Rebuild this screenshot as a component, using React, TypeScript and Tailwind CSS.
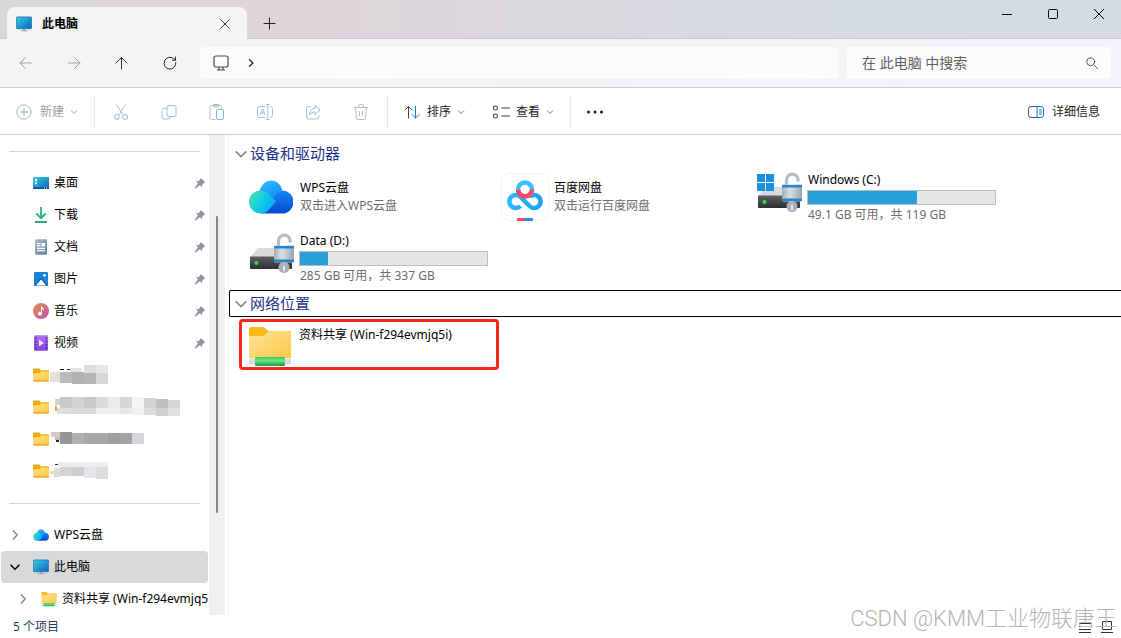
import type { ReactNode } from "react";

type IconProps = { className?: string };

type Drive = { name: string; free: string; used: number; system?: boolean };

type Block = [x: number, y: number, w: number, h: number, fill: string];

function MonitorIcon({ className = "w-4 h-4" }: IconProps) {
  return (
    <svg viewBox="0 0 16 16" className={className} aria-hidden="true">
      <defs>
        <linearGradient id="monitor" x1="0" y1="0" x2="1" y2="1">
          <stop offset="0" stopColor="#35d0e2" />
          <stop offset="1" stopColor="#0f63bd" />
        </linearGradient>
      </defs>
      <path d="M7 12h2v2.200h2.200v1H4.800v-1H7z" fill="#9aa7b2" />
      <rect x="0.400" y="0.900" width="15.200" height="11.800" rx="0.800" fill="url(#monitor)" stroke="#1c6f9e" strokeWidth="0.700" />
    </svg>
  );
}

function DesktopIcon() {
  return (
    <svg viewBox="0 0 16 16" className="w-4 h-4" aria-hidden="true">
      <rect y="2" width="16" height="12" rx="1" fill="url(#monitor)" />
      <path d="M0 12.500h16V13a1 1 0 0 1-1 1H1a1 1 0 0 1-1-1z" fill="#0b4a86" />
      <path d="M2 4h2v2H2zM2 7.300h2v2H2zM11 12.500h1v1h-1zM13 12.500h1v1h-1z" fill="#fff" />
    </svg>
  );
}

function DownloadIcon() {
  return (
    <svg viewBox="0 0 16 16" className="w-4 h-4" fill="none" stroke="#1fb886" strokeWidth="1.800" aria-hidden="true">
      <path d="M8 0v11M3.300 6.500 8 11.200l4.700-4.700" />
      <path d="M2 15h12" stroke="#129c74" />
    </svg>
  );
}

function DocumentIcon() {
  return (
    <svg viewBox="0 0 16 16" className="w-4 h-4" aria-hidden="true">
      <defs>
        <linearGradient id="document" x1="0" y1="0" x2="1" y2="1">
          <stop offset="0" stopColor="#a9bdd0" />
          <stop offset="1" stopColor="#5f7d9c" />
        </linearGradient>
      </defs>
      <rect x="2" y="0.300" width="12" height="15.500" rx="1" fill="url(#document)" />
      <path d="M4 4h3.500v1.300H4zM4 6.300h3.500v1.300H4zM8.500 4H12v3.600H8.500zM4 8.800h8v1.200H4zM4 11h8v1.200H4z" fill="#fff" />
    </svg>
  );
}

function PictureIcon() {
  return (
    <svg viewBox="0 0 16 16" className="w-4 h-4" aria-hidden="true">
      <rect x="1" y="1" width="14" height="14" rx="1.200" fill="#1583da" />
      <path d="M1 14.800 7.200 7.500a1 1 0 0 1 1.600 0L15 14.800z" fill="#0c5fb2" />
      <path d="M3 14.500 7.400 9a.8.8 0 0 1 1.200 0l4.500 5.500z" fill="#fff" />
      <circle cx="11.500" cy="4.300" r="1.400" fill="#fff" />
    </svg>
  );
}

function MusicIcon() {
  return (
    <svg viewBox="0 0 16 16" className="w-4 h-4" aria-hidden="true">
      <defs>
        <linearGradient id="music" x1="0" y1="0" x2="1" y2="1">
          <stop offset="0" stopColor="#f08a55" />
          <stop offset="1" stopColor="#b4559b" />
        </linearGradient>
      </defs>
      <circle cx="8" cy="8" r="8" fill="url(#music)" />
      <path d="M8 3.200h.9c.2 1.300 1 1.900 2.100 2.200v1.500C10.200 6.800 9.500 6.500 9 6v4.500A2 2 0 1 1 8 8.900z" fill="#fff" />
    </svg>
  );
}

function VideoIcon() {
  return (
    <svg viewBox="0 0 16 16" className="w-4 h-4" aria-hidden="true">
      <defs>
        <linearGradient id="video" x1="0" y1="0" x2="0" y2="1">
          <stop offset="0" stopColor="#b072f5" />
          <stop offset="1" stopColor="#8444de" />
        </linearGradient>
      </defs>
      <rect x="1" y="0.300" width="14" height="15.500" rx="1" fill="url(#video)" />
      <path
        d="M2 2.500h1.500V4H2zM2 5.800h1.500v1.500H2zM2 9h1.500v1.500H2zM2 12.300h1.500v1.500H2zM12.500 2.500H14V4h-1.500zM12.500 5.800H14v1.500h-1.500zM12.500 9H14v1.500h-1.500zM12.500 12.300H14v1.500h-1.500z"
        fill="#4c2396"
      />
      <path d="M6 4.800 11 8l-5 3.300z" fill="#f1e6ff" />
    </svg>
  );
}

function FolderIcon() {
  return (
    <svg viewBox="0 0 16 16" className="w-4 h-4" aria-hidden="true">
      <defs>
        <linearGradient id="folder" x1="0" y1="0" x2="1" y2="1">
          <stop offset="0" stopColor="#ffe28c" />
          <stop offset="1" stopColor="#fdc63c" />
        </linearGradient>
      </defs>
      <path d="M0 2.500a1 1 0 0 1 1-1h5.300L8 3.300h7a1 1 0 0 1 1 1V8H0z" fill="#f3aa12" />
      <path d="M0 6.200h6.500L8.200 4.500H15a1 1 0 0 1 1 1v8a1 1 0 0 1-1 1H1a1 1 0 0 1-1-1z" fill="url(#folder)" />
      <path d="M0 13.200h16v.3a1 1 0 0 1-1 1H1a1 1 0 0 1-1-1z" fill="#e9a51f" />
    </svg>
  );
}

function NetworkFolderIcon({ className = "w-4 h-4" }: IconProps) {
  return (
    <svg viewBox="0 0 44 44" className={className} aria-hidden="true">
      <defs>
        <linearGradient id="share-front" x1="0" y1="0" x2="1" y2="1">
          <stop offset="0" stopColor="#ffe49a" />
          <stop offset="1" stopColor="#fcc744" />
        </linearGradient>
        <linearGradient id="share-pipe" x1="0" y1="0" x2="0" y2="1">
          <stop offset="0" stopColor="#3bc55f" />
          <stop offset="0.400" stopColor="#69e884" />
          <stop offset="1" stopColor="#179a3c" />
        </linearGradient>
      </defs>
      <path d="M1 5a2 2 0 0 1 2-2h11c1.500 0 2.500.6 3.500 1.600L20 7h21a2 2 0 0 1 2 2v10H1z" fill="#fbb916" />
      <path d="M1 12h13c1.500 0 2.300-.5 3.300-1.500L19.500 8.300c.7-.8 1.500-1.100 2.500-1.100h19a2 2 0 0 1 2 2V34H1z" fill="url(#share-front)" />
      <rect x="1" y="34.500" width="42" height="6" rx="1" fill="#d9dde0" />
      <rect x="7" y="33" width="30" height="9" rx="1" fill="url(#share-pipe)" />
    </svg>
  );
}

function CloudIcon({ className = "w-4 h-4" }: IconProps) {
  return (
    <svg viewBox="0 0 44 34" className={className} aria-hidden="true">
      <defs>
        <linearGradient id="cloud-left" x1="0" y1="0.200" x2="1" y2="0.800">
          <stop offset="0" stopColor="#3fe6a8" />
          <stop offset="0.500" stopColor="#12c8e8" />
          <stop offset="1" stopColor="#0aa2f7" />
        </linearGradient>
        <linearGradient id="cloud-top" x1="0" y1="0" x2="0.500" y2="1">
          <stop offset="0" stopColor="#35c3ff" />
          <stop offset="1" stopColor="#0e86fb" />
        </linearGradient>
        <linearGradient id="cloud-right" x1="0" y1="0" x2="0" y2="1">
          <stop offset="0" stopColor="#1488f5" />
          <stop offset="1" stopColor="#0747cf" />
        </linearGradient>
      </defs>
      <path d="M33 10.500a11.500 11.500 0 0 1 0 23H12L28 12.500a12 12 0 0 1 5-2z" fill="url(#cloud-right)" />
      <path d="M10.500 11.500C12 5 16.500.5 22.200.5c5.300 0 9.600 3.800 11 10-3 .8-5 2.400-7 5L20 22z" fill="url(#cloud-top)" />
      <path d="M11.500 10.500c3.800 0 6.500 1.600 9 4.500l6.700 6.300-7.500 8.700c-2 2.400-4.600 3.500-8.200 3.500a11.500 11.500 0 0 1 0-23z" fill="url(#cloud-left)" />
    </svg>
  );
}

function BaiduDiskIcon() {
  return (
    <svg viewBox="0 0 48 48" className="w-12 h-12" fill="none" aria-hidden="true">
      <defs>
        <linearGradient id="disk-loop" x1="0" y1="0" x2="1" y2="0">
          <stop offset="0" stopColor="#2ab9ff" />
          <stop offset="1" stopColor="#18a2fb" />
        </linearGradient>
      </defs>
      <rect x="0.500" y="0.500" width="47" height="47" rx="8" fill="#fff" stroke="#f1f1f1" />
      <circle cx="24" cy="16.500" r="7" stroke="#38c0ff" strokeWidth="4.500" />
      <path d="M19.500 33a6.500 6.500 0 1 1 .5-8.500l8 8a6.500 6.500 0 1 0 .5-8.500" stroke="url(#disk-loop)" strokeWidth="4.500" />
      <path d="M17 16.500a7 7 0 0 0 14 0" stroke="#fb4a67" strokeWidth="4.500" />
      <path d="M16 45h8v3h-8z" fill="#fb4a67" />
      <path d="M24 45h8v3h-8z" fill="#2a8cff" />
    </svg>
  );
}

function DriveIcon({ system }: { system?: boolean }) {
  return (
    <svg viewBox="0 0 48 48" className="w-12 h-12" aria-hidden="true">
      <defs>
        <linearGradient id="drive-front" x1="0" y1="0" x2="0" y2="1">
          <stop offset="0" stopColor="#5f6164" />
          <stop offset="1" stopColor="#2d2e30" />
        </linearGradient>
        <linearGradient id="lock-body" x1="0" y1="0" x2="1" y2="0">
          <stop offset="0" stopColor="#a4adb6" />
          <stop offset="0.400" stopColor="#dbe1e6" />
          <stop offset="1" stopColor="#9aa4ae" />
        </linearGradient>
      </defs>
      <path d="M11 16h27l7 9H3z" fill="#d9dadc" />
      <rect x="3" y="24.500" width="42" height="12.500" rx="1" fill="url(#drive-front)" />
      <circle cx="9.500" cy="31" r="1.900" fill="#36e04a" />
      {system && <path d="M2 3h8v8H2zM11 3h8v8h-8zM2 12h8v8H2zM11 12h8v8h-8z" fill="#1a90e0" />}
      <path d="M31.500 15V9a5.800 5.800 0 0 1 11.600 0v1.500" fill="none" stroke="#b4bcc4" strokeWidth="3.200" />
      <circle cx="37" cy="35.500" r="5.500" fill="#a9b2bb" />
      <path d="M37 34.500v4" stroke="#e7ebee" strokeWidth="1.800" strokeLinecap="round" />
      <rect x="27" y="13.500" width="20" height="17" rx="1" fill="url(#lock-body)" />
      <path d="M27 14h20v2.600H27zM27 27.500h20v2.600H27z" fill="#2287d4" />
    </svg>
  );
}

function PinIcon() {
  return (
    <svg viewBox="0 0 12 12" className="w-3 h-3" aria-hidden="true">
      <path d="M7 1 11.200 5.200 9.900 6 8.300 7.600 8 10.200 5.700 8.300 2 11.200 1 11.300 1 10.300 3.900 6.500 1.900 4.300 4.600 3.900 6.200 2.300z" fill="#8a97a3" />
    </svg>
  );
}

function LineIcon({ children, className = "w-4 h-4" }: IconProps & { children: ReactNode }) {
  return (
    <svg viewBox="0 0 16 16" className={className} fill="none" stroke="currentColor" strokeLinecap="round" strokeLinejoin="round" aria-hidden="true">
      {children}
    </svg>
  );
}

function Chevron({ className = "w-2 h-2" }: IconProps) {
  return (
    <svg viewBox="0 0 8 8" className={className} fill="none" stroke="currentColor" aria-hidden="true">
      <path d="M1 2.500 4 5.500 7 2.500" />
    </svg>
  );
}

function Redacted({ blocks, label }: { blocks: Block[]; label: string }) {
  return (
    <svg viewBox="0 0 136 24" className="w-[136px] h-6 -ml-1" shapeRendering="crispEdges" role="img" aria-label={label}>
      {blocks.map(([x, y, w, h, fill]) => (
        <rect key={`${x}-${y}`} x={x} y={y} width={w} height={h} fill={fill} />
      ))}
    </svg>
  );
}

const pinned = [
  { label: "桌面", icon: <DesktopIcon /> },
  { label: "下载", icon: <DownloadIcon /> },
  { label: "文档", icon: <DocumentIcon /> },
  { label: "图片", icon: <PictureIcon /> },
  { label: "音乐", icon: <MusicIcon /> },
  { label: "视频", icon: <VideoIcon /> },
];

// folder names are hidden behind pixel blocks, coordinates are inside a 136x24 strip
const hiddenFolders: Block[][] = [
  [
    [10, 6, 4, 1, "#222"], [17, 6, 3, 1, "#222"],
    [20, 5, 12, 6, "#e4e4e5"], [34, 2, 12, 9, "#dedddf"], [46, 2, 12, 9, "#e8e8ea"],
    [0, 9, 10, 10, "#e3dfd8"], [10, 9, 12, 11, "#bab9b8"], [22, 9, 12, 12, "#b1b1b4"], [34, 10, 12, 11, "#b7b6b7"], [46, 10, 12, 11, "#d7d7da"],
  ],
  [
    [5, 4, 5, 6, "#d3d1cf"], [10, 2, 12, 11, "#c9cacd"], [22, 2, 12, 11, "#d6d2d1"], [34, 2, 12, 11, "#cacacd"], [46, 2, 12, 11, "#dbdadd"],
    [58, 2, 12, 11, "#ecebea"], [70, 2, 12, 11, "#d8d5d3"], [82, 2, 12, 11, "#f1f4f8"], [94, 3, 12, 10, "#d6d2ce"], [106, 4, 12, 9, "#bcbebf"], [118, 5, 12, 8, "#d3d5d6"],
    [5, 11, 2, 5, "#eda04f"], [7, 13, 15, 6, "#dedddd"], [22, 13, 24, 6, "#d9d9da"], [46, 13, 24, 6, "#eeeeee"], [70, 13, 12, 6, "#e6e8e9"],
    [82, 13, 12, 7, "#f1f0f0"], [94, 13, 12, 7, "#dedddb"], [106, 13, 12, 8, "#d2d0ce"], [118, 13, 12, 8, "#dfe3e6"],
  ],
  [
    [1, 5, 9, 5, "#d3cdc3"], [5, 10, 5, 3, "#bdb9b3"], [6, 13, 3, 2, "#222"], [10, 5, 12, 12, "#969696"], [22, 6, 12, 11, "#b1afb3"],
    [34, 6, 12, 11, "#a6a6a5"], [46, 6, 12, 11, "#a7a8aa"], [58, 6, 12, 11, "#a19e9d"], [70, 6, 12, 11, "#a3a3a3"], [82, 6, 12, 11, "#d4d8dc"],
  ],
  [
    [5, 5, 3, 1, "#222"], [8, 3, 14, 5, "#ececec"], [22, 3, 36, 5, "#eeeeee"], [0, 12, 4, 3, "#dfdbd7"], [4, 9, 6, 9, "#dfdbd7"],
    [10, 8, 12, 9, "#d5d3d3"], [22, 8, 12, 9, "#cfcfcf"], [34, 8, 12, 11, "#e1e7ea"], [46, 8, 12, 12, "#dedee1"],
  ],
];

const driveC: Drive = { name: "Windows (C:)", free: "49.1 GB 可用，共 119 GB", used: 58.5, system: true };
const driveD: Drive = { name: "Data (D:)", free: "285 GB 可用，共 337 GB", used: 15 };

function TitleBar() {
  return (
    <header className="flex items-end h-[39px] pl-[7px] border-b border-[#c9cbd5] bg-linear-to-r from-[#d8d8d9] via-[#dfd5d9] via-25% to-[#d5dbe5] to-75%">
      <div className="flex items-center w-60 h-8 -mb-px pl-[9px] pr-3 pt-px rounded-t-lg bg-[#f4f4f4]">
        <MonitorIcon />
        <span className="ml-2.5 text-xs font-semibold text-black">此电脑</span>
        <button aria-label="关闭标签页" className="ml-auto flex items-center justify-center w-5 h-5 text-[#222]">
          <LineIcon className="w-3.5 h-3.5">
            <path d="M3 3 13 13M13 3 3 13" />
          </LineIcon>
        </button>
      </div>
      <button aria-label="新建标签页" className="flex items-center justify-center w-8 h-[30px] ml-1.5 text-[#222]">
        <LineIcon>
          <path d="M8.500 3v11M3 8.500h11" />
        </LineIcon>
      </button>
      <div className="flex self-start ml-auto -mr-px text-black">
        <button aria-label="最小化" className="flex items-center justify-center w-[46px] h-7">
          <svg viewBox="0 0 10 10" className="w-2.5 h-2.5" stroke="currentColor"><path d="M0 5.500h10" /></svg>
        </button>
        <button aria-label="最大化" className="flex items-center justify-center w-[46px] h-7">
          <svg viewBox="0 0 10 10" className="w-2.5 h-2.5" fill="none" stroke="currentColor"><rect x="0.500" y="0.500" width="9" height="9" rx="1" /></svg>
        </button>
        <button aria-label="关闭" className="flex items-center justify-center w-[46px] h-7">
          <svg viewBox="0 0 10 10" className="w-2.5 h-2.5" stroke="currentColor"><path d="M0 0 10 10M10 0 0 10" /></svg>
        </button>
      </div>
    </header>
  );
}

function NavButton({ label, disabled, children }: { label: string; disabled?: boolean; children: ReactNode }) {
  return (
    <button aria-label={label} disabled={disabled} className="flex items-center justify-center w-12 h-8 text-[#2b2b2b] disabled:text-[#a3a3a3]">
      <LineIcon>{children}</LineIcon>
    </button>
  );
}

function NavBar() {
  return (
    <div className="flex items-center h-[49px] pl-0.5 pr-2.5 border-b border-[#c9cad4] bg-linear-to-r from-[#f4f4f4] via-[#f5f2f4] to-[#f2f4f8]">
      <NavButton label="后退" disabled>
        <path d="M14 8H2M7.500 2.500 2 8l5.500 5.500" />
      </NavButton>
      <NavButton label="前进" disabled>
        <path d="M2 8h12M8.500 2.500 14 8l-5.500 5.500" />
      </NavButton>
      <NavButton label="向上">
        <path d="M7.500 14V2.500M2 8l5.500-5.500L13 8" />
      </NavButton>
      <NavButton label="刷新">
        <path d="M13.800 7.500A5.900 5.900 0 1 1 11.500 3.500L13.300 5M13.500 2v3.200h-3.200" />
      </NavButton>
      <div className="flex flex-1 items-center h-8 ml-1.5 pl-3 rounded bg-[#fbfbfc]">
        <button aria-label="此电脑" className="text-[#4a4a4a]">
          <svg viewBox="0 0 18 18" className="w-[18px] h-[18px]" fill="none" stroke="currentColor" strokeWidth="1.200" aria-hidden="true">
            <rect x="2" y="2" width="14" height="11" rx="2" />
            <path d="M7 13v2.500M11 13v2.500M5 16h8" />
          </svg>
        </button>
        <button aria-label="展开路径" className="ml-4 text-[#222]">
          <Chevron className="w-2.5 h-2.5 -rotate-90" />
        </button>
      </div>
      <label className="flex items-center w-66 h-8 ml-2 pl-[15px] pr-3 rounded bg-[#fcfcfc]">
        <input type="search" aria-label="搜索" placeholder="在 此电脑 中搜索" className="flex-1 min-w-0 bg-transparent text-sm outline-none placeholder:text-[#5f5f5f]" />
        <LineIcon className="w-3.5 h-3.5 text-[#444]">
          <circle cx="6.500" cy="6.500" r="4.500" />
          <path d="M10 10 14.500 14.500" />
        </LineIcon>
      </label>
    </div>
  );
}

function ToolButton({ label, children }: { label: string; children: ReactNode }) {
  return (
    <button aria-label={label} disabled className="flex items-center justify-center w-12 h-8 text-[#b9bcbf]">
      <svg viewBox="0 0 18 18" className="w-[18px] h-[18px]" fill="none" stroke="currentColor" strokeLinejoin="round" aria-hidden="true">
        {children}
      </svg>
    </button>
  );
}

function Toolbar() {
  return (
    <div className="flex items-center h-[47px] pt-0.5 border-b border-[#c9cbd3] bg-white text-xs text-[#1b1b1b]">
      <button disabled className="flex items-center pl-4 w-[94px] h-8 text-[#a0a0a0]">
        <LineIcon>
          <circle cx="8" cy="8" r="7.200" stroke="#b8babd" />
          <path d="M8 4.500v7M4.500 8h7" stroke="#7ab5e6" />
        </LineIcon>
        <span className="ml-2">新建</span>
        <Chevron className="w-2 h-2 ml-1.5" />
      </button>
      <span className="w-px h-8 mr-0.5 bg-[#e8e8e8]" />
      <ToolButton label="剪切">
        <path d="M4.500 1.500 11.200 12M13.500 1.500 6.800 12" />
        <circle cx="4.800" cy="14" r="2.500" stroke="#8cc3ee" />
        <circle cx="13.200" cy="14" r="2.500" stroke="#8cc3ee" />
      </ToolButton>
      <ToolButton label="复制">
        <path d="M7 5.500H4a2 2 0 0 0-2 2V14a2 2 0 0 0 2 2h4a2 2 0 0 0 2-2" />
        <rect x="7" y="2.500" width="9" height="11" rx="2" stroke="#8cc3ee" />
      </ToolButton>
      <ToolButton label="粘贴">
        <path d="M7.500 16.500h-4a1.500 1.500 0 0 1-1.500-1.500V4a1.500 1.500 0 0 1 1.500-1.500H12A1.500 1.500 0 0 1 13.500 4v1.500M5.500 1.500h5v2.500h-5z" />
        <rect x="8.500" y="6.500" width="7" height="10" rx="1.500" stroke="#7ab8ea" />
      </ToolButton>
      <ToolButton label="重命名">
        <path d="M9.500 3.500h-6a2 2 0 0 0-2 2v7a2 2 0 0 0 2 2h6M14 3.500a2.500 2.500 0 0 1 2.500 2.500v6A2.500 2.500 0 0 1 14 14.500" />
        <path d="M4.200 12 6.700 6l2.500 6M5.200 10h3M11.800 1.500v15M10 1.500h3.600M10 16.500h3.600" stroke="#8cc3ee" />
      </ToolButton>
      <ToolButton label="共享">
        <path d="M7 3.500H4.500a2 2 0 0 0-2 2V14a2 2 0 0 0 2 2H13a2 2 0 0 0 2-2v-2" />
        <path d="M11 2.500 16 7l-5 4.500V9C8.500 9 6.800 10 5.500 12c.2-4 2-6.500 5.500-7z" stroke="#8cc3ee" />
      </ToolButton>
      <ToolButton label="删除">
        <path d="M2 4.500h14M6.500 4.500V3a1.500 1.500 0 0 1 1.500-1.500h2A1.500 1.500 0 0 1 11.500 3v1.500M3.500 4.500 4.500 15A1.500 1.500 0 0 0 6 16.500h6a1.500 1.500 0 0 0 1.500-1.500l1-10.500M7.500 8v5M10.500 8v5" />
      </ToolButton>
      <span className="w-px h-8 ml-0.5 bg-[#e8e8e8]" />
      <button className="flex items-center h-8 ml-4">
        <LineIcon>
          <path d="M4.500 14V2.500M1 6l3.500-3.500L8 6" stroke="#444" />
          <path d="M11.500 2.500V14M8 10.500l3.500 3.500 3.500-3.500" stroke="#1279d3" />
        </LineIcon>
        <span className="ml-[7px]">排序</span>
        <Chevron className="w-2 h-2 ml-1.5 text-[#777]" />
      </button>
      <button className="flex items-center h-8 ml-[27px]">
        <LineIcon className="w-[18px] h-[18px]">
          <circle cx="3" cy="4.500" r="1.800" stroke="#444" strokeWidth="0.900" />
          <circle cx="3" cy="11.500" r="1.800" stroke="#444" strokeWidth="0.900" />
          <path d="M8.500 4.500h7M8.500 11.500h7" stroke="#444" strokeWidth="0.900" />
        </LineIcon>
        <span className="ml-1.5">查看</span>
        <Chevron className="w-2 h-2 ml-1.5 text-[#777]" />
      </button>
      <span className="w-px h-8 ml-4 bg-[#e8e8e8]" />
      <button aria-label="更多" className="flex items-center justify-center w-12 h-8">
        <svg viewBox="0 0 18 4" className="w-[18px] h-1" fill="currentColor" aria-hidden="true">
          <circle cx="2.500" cy="2" r="1.500" />
          <circle cx="9" cy="2" r="1.500" />
          <circle cx="15.500" cy="2" r="1.500" />
        </svg>
      </button>
      <button className="flex items-center h-8 ml-auto mr-[21px]">
        <LineIcon>
          <path d="M9 2.500H3a2.500 2.500 0 0 0-2.500 2.500v6A2.500 2.500 0 0 0 3 13.500h6" stroke="#555" />
          <path d="M9.500 2.500H13a2.500 2.500 0 0 1 2.500 2.500v6a2.500 2.500 0 0 1-2.500 2.500H9.500zM11.500 6h2M11.500 8h2M11.500 10h2" stroke="#0f78d4" />
        </LineIcon>
        <span className="ml-2">详细信息</span>
      </button>
    </div>
  );
}

function Sidebar() {
  return (
    <aside className="flex w-[225px] shrink-0">
      <nav className="flex-1 min-w-0 text-xs text-black">
        <hr className="mt-4 mx-[9px] mb-[15px] border-[#d2d2d2]" />
        <ul>
          {pinned.map((item) => (
            <li key={item.label}>
              <a href="#" className="flex items-center h-8 pl-[33px] pr-[3px]">
                {item.icon}
                <span className="ml-[5px]">{item.label}</span>
                <span className="ml-auto">
                  <PinIcon />
                </span>
              </a>
            </li>
          ))}
          {hiddenFolders.map((blocks, i) => (
            <li key={i}>
              <a href="#" className="flex items-center h-8 pl-[33px]">
                <FolderIcon />
                <span className="ml-[5px]">
                  <Redacted blocks={blocks} label={`文件夹 ${i + 1}`} />
                </span>
              </a>
            </li>
          ))}
        </ul>
        <hr className="mt-4 mx-[9px] mb-[15px] border-[#d2d2d2]" />
        <ul>
          <li>
            <a href="#" className="flex items-center h-8 pl-[9px]">
              <Chevron className="w-3 h-3 -rotate-90 text-[#888]" />
              <CloudIcon className="w-4 h-3 ml-3" />
              <span className="ml-[5px]">WPS云盘</span>
            </a>
          </li>
          <li>
            <a href="#" aria-current="page" className="flex items-center h-8 mx-px pl-2 rounded-sm bg-[#d9d9d9]">
              <Chevron className="w-3 h-3 text-black" />
              <MonitorIcon className="w-4 h-4 ml-3" />
              <span className="ml-[5px]">此电脑</span>
            </a>
          </li>
          <li>
            <a href="#" className="flex items-center h-8 pl-[17px] overflow-hidden whitespace-nowrap">
              <Chevron className="w-3 h-3 shrink-0 -rotate-90 text-[#888]" />
              <NetworkFolderIcon className="w-4 h-4 shrink-0 ml-3" />
              <span className="ml-[5px]">资料共享 (Win-f294evmjq5i)</span>
            </a>
          </li>
        </ul>
      </nav>
      <div className="w-4 pt-[81px] bg-[#efefef]">
        <div className="w-0.5 h-[297px] mx-auto rounded-full bg-[#858585]" />
      </div>
    </aside>
  );
}

function GroupHeader({ children, focused }: { children: string; focused?: boolean }) {
  return (
    <h2 className={focused ? "rounded-l-xs border border-r-0 border-black" : "border border-transparent"}>
      <button className="flex items-center h-[25px] pl-1 text-[15px] text-[#1e3287]">
        <Chevron className="w-3.5 h-3.5 text-[#8a8a8a]" />
        <span className="ml-0.5">{children}</span>
      </button>
    </h2>
  );
}

function AppItem({ icon, name, hint }: { icon: ReactNode; name: string; hint: string }) {
  return (
    <button className="flex items-center h-[61px] w-[254px] pl-2 pb-0.5 text-left text-xs">
      <span className="flex justify-center w-12">{icon}</span>
      <span className="ml-[5px] leading-[18px]">
        <span className="block text-black">{name}</span>
        <span className="block text-[#6d6d6d]">{hint}</span>
      </span>
    </button>
  );
}

function DriveItem({ drive }: { drive: Drive }) {
  return (
    <button className="flex items-start h-[61px] w-[254px] pl-2 pt-1 text-left text-xs">
      <DriveIcon system={drive.system} />
      <span className="ml-1 w-[189px] leading-[18px]">
        <span className="block pl-px text-black">{drive.name}</span>
        <span className="block h-[15px] my-px border border-[#bcbcbc] bg-[#e6e6e6]">
          <span className="block h-full bg-[#26a0da]" style={{ width: `${drive.used}%` }} />
        </span>
        <span className="block pl-px text-[#6d6d6d]">{drive.free}</span>
      </span>
    </button>
  );
}

function Content() {
  return (
    <main className="flex-1 min-w-0 ml-[3px] pt-[5px] border-l border-[#f3f3f3]">
      <GroupHeader>设备和驱动器</GroupHeader>
      <div className="flex flex-wrap pl-2.5 pb-px">
        <AppItem icon={<CloudIcon className="w-11 h-[34px]" />} name="WPS云盘" hint="双击进入WPS云盘" />
        <AppItem icon={<BaiduDiskIcon />} name="百度网盘" hint="双击运行百度网盘" />
        <DriveItem drive={driveC} />
        <DriveItem drive={driveD} />
      </div>
      <GroupHeader focused>网络位置</GroupHeader>
      <button className="flex items-start w-[260px] h-[51px] mt-0.5 ml-2.5 pl-1.5 pt-0.5 text-left text-xs text-black rounded-sm border-3 border-[#fb2418]">
        <NetworkFolderIcon className="w-11 h-11" />
        <span className="ml-[7px] mt-0.5 leading-[18px]">资料共享 (Win-f294evmjq5i)</span>
      </button>
    </main>
  );
}

function StatusBar() {
  return (
    <footer className="relative flex items-center h-[23px] pl-[13px] pr-2 text-xs text-[#1f3b5c]">
      <span>5 个项目</span>
      <div className="flex gap-2.5 ml-auto text-[#333]">
        <button aria-label="详细列表">
          <svg viewBox="0 0 12 12" className="w-3 h-3" stroke="currentColor"><path d="M0 2.500h12M0 5.500h12M0 8.500h12M0 11.500h12" /></svg>
        </button>
        <button aria-label="大图标">
          <svg viewBox="0 0 12 12" className="w-3 h-3" fill="none" stroke="currentColor"><path d="M1.500.5h9v8h-9zM0 11.500h12" /></svg>
        </button>
      </div>
      <span className="absolute right-1 bottom-[3px] text-[22px] leading-8 whitespace-nowrap font-light text-[#b4b4b4] font-[Roboto,'Noto_Sans_CJK_SC',sans-serif] pointer-events-none">
        CSDN @KMM工业物联唐王
      </span>
    </footer>
  );
}

export default function App() {
  return (
    <div lang="zh-CN" className="flex flex-col min-h-screen bg-white font-['Noto_Sans','Noto_Sans_CJK_SC',sans-serif]">
      <TitleBar />
      <NavBar />
      <Toolbar />
      <div className="flex flex-1">
        <Sidebar />
        <Content />
      </div>
      <StatusBar />
    </div>
  );
}
